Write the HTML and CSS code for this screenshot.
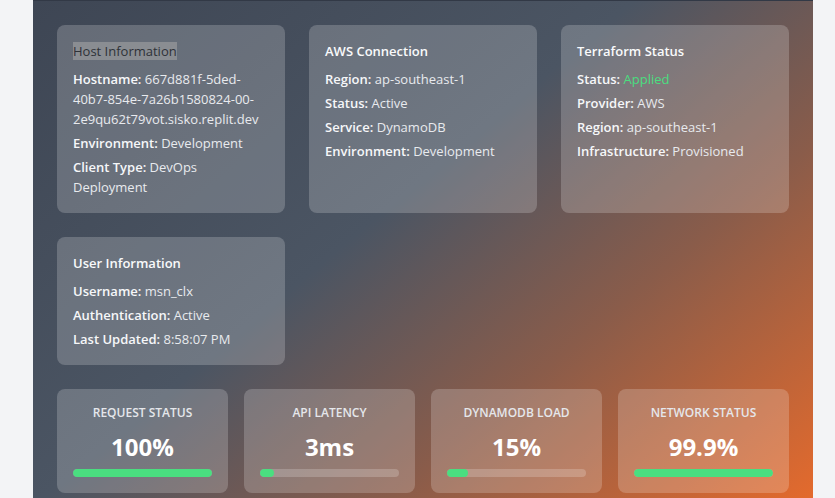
FILE: index.html
```html
<!DOCTYPE html>
<html lang="en">
<head>
<meta charset="utf-8">
<title>DevOps Dashboard</title>
<link rel="stylesheet" href="styles.css">
</head>
<body>
<div class="page">
  <main class="panel">
    <section class="info-grid">
      <div class="card">
        <h3 class="card-title"><span class="selected">Host Information</span></h3>
        <p><b>Hostname:</b> 667d881f-5ded-40b7-854e-7a26b1580824-00-2e9qu62t79vot.sisko.replit.dev</p>
        <p><b>Environment:</b> Development</p>
        <p><b>Client Type:</b> DevOps Deployment</p>
      </div>
      <div class="card">
        <h3 class="card-title">AWS Connection</h3>
        <p><b>Region:</b> ap-southeast-1</p>
        <p><b>Status:</b> Active</p>
        <p><b>Service:</b> DynamoDB</p>
        <p><b>Environment:</b> Development</p>
      </div>
      <div class="card">
        <h3 class="card-title">Terraform Status</h3>
        <p><b>Status:</b> <span class="ok">Applied</span></p>
        <p><b>Provider:</b> AWS</p>
        <p><b>Region:</b> ap-southeast-1</p>
        <p><b>Infrastructure:</b> Provisioned</p>
      </div>
      <div class="card">
        <h3 class="card-title">User Information</h3>
        <p><b>Username:</b> msn_clx</p>
        <p><b>Authentication:</b> Active</p>
        <p><b>Last Updated:</b> 8:58:07 PM</p>
      </div>
    </section>
    <section class="metrics">
      <div class="metric">
        <div class="metric-label">Request Status</div>
        <div class="metric-value">100%</div>
        <div class="bar"><div class="fill" style="width:100%"></div></div>
      </div>
      <div class="metric">
        <div class="metric-label">API Latency</div>
        <div class="metric-value">3ms</div>
        <div class="bar"><div class="fill" style="width:10%"></div></div>
      </div>
      <div class="metric">
        <div class="metric-label">DynamoDB Load</div>
        <div class="metric-value">15%</div>
        <div class="bar"><div class="fill" style="width:15%"></div></div>
      </div>
      <div class="metric">
        <div class="metric-label">Network Status</div>
        <div class="metric-value">99.9%</div>
        <div class="bar"><div class="fill" style="width:99.9%"></div></div>
      </div>
    </section>
  </main>
</div>
</body>
</html>
```

FILE: styles.css
```css
* { box-sizing: border-box; }
html, body { margin: 0; padding: 0; }
body {
  background: #f3f4f6;
  font-family: "Open Sans", "Noto Sans", sans-serif;
  font-size: 13px;
  color: #f3f4f6;
  height: 498px;
  overflow: hidden;
}
.page {
  padding-left: 33px;
}
.panel {
  width: 780px;
  height: 520px;
  border-top: 1px solid #323946;
  padding: 24px;
  background: linear-gradient(140deg, #3e4654 0%, #4b5563 43%, #8a5c4a 68%, #e96b2b 100%);
  display: flex;
  flex-direction: column;
  gap: 24px;
}
.info-grid {
  display: grid;
  grid-template-columns: repeat(3, 1fr);
  gap: 24px;
}
.card {
  background: rgba(255, 255, 255, 0.2);
  border-radius: 8px;
  padding: 16px;
}
.card-title {
  margin: 0 0 8px;
  font-size: 13px;
  line-height: 20px;
  font-weight: 600;
  color: #f9fafb;
}
.selected {
  background: #8a8d92;
  color: #2e3238;
  font-weight: 500;
}
.card p {
  margin: 0 0 4px;
  line-height: 20px;
  color: #e8eaee;
}
.card p:last-child { margin-bottom: 0; }
.card b {
  font-weight: 600;
  color: #f6f7f9;
}
.ok { color: #4ade80; }
.metrics {
  display: grid;
  grid-template-columns: repeat(4, 1fr);
  gap: 16px;
}
.metric {
  background: rgba(255, 255, 255, 0.2);
  border-radius: 8px;
  padding: 16px;
  text-align: center;
}
.metric-label {
  font-size: 12px;
  line-height: 16px;
  font-weight: 600;
  text-transform: uppercase;
  color: #e5e7eb;
  margin-bottom: 8px;
}
.metric-value {
  font-size: 24px;
  line-height: 36px;
  font-weight: 700;
  color: #ffffff;
  margin-bottom: 4px;
}
.bar {
  height: 8px;
  border-radius: 4px;
  background: rgba(255, 255, 255, 0.2);
  overflow: hidden;
}
.fill {
  height: 100%;
  border-radius: 4px;
  background: #4ade80;
}
```
